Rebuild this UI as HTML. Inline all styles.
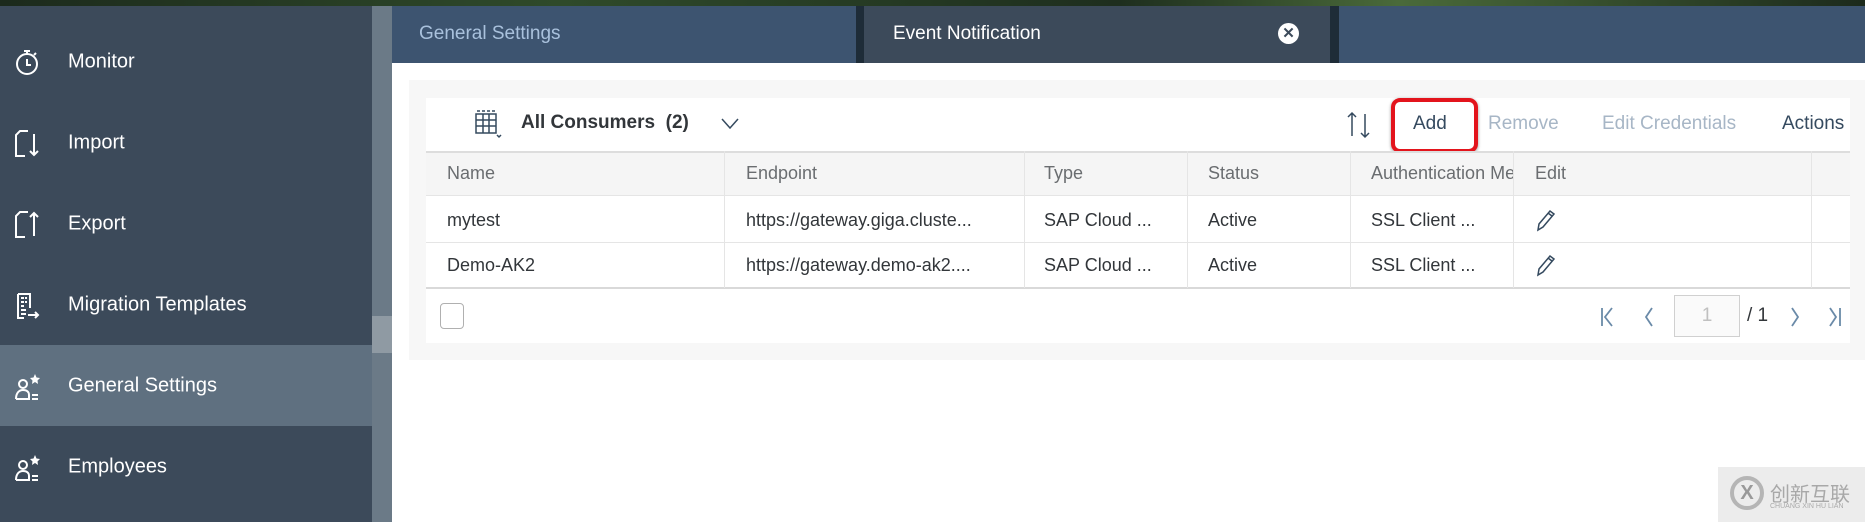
<!DOCTYPE html>
<html><head><meta charset="utf-8"><style>
*{margin:0;padding:0;box-sizing:border-box}
body{width:1865px;height:522px;overflow:hidden;background:#fff;font-family:"Liberation Sans",sans-serif;position:relative}
.a{position:absolute}
.side{left:0;top:6px;width:372px;height:516px;background:#3c4a5a}
.item{position:absolute;left:0;width:372px;height:81px;color:#fff;font-size:20px}
.item span{position:absolute;left:68px;top:50%;transform:translateY(-50%)}
.item svg{position:absolute;left:13px;top:50%;transform:translateY(-50%)}
.t{font-size:18px;color:#32363a;position:absolute;white-space:nowrap}
.h{color:#6a6d70}
.vb{position:absolute;top:151px;height:137px;width:1px;background:#e5e5e5}
</style></head><body>
<div class="a" style="left:0;top:0;width:1865px;height:6px;background:linear-gradient(90deg,#1c2a1c,#2f4a2a 30%,#1e2e1e 60%,#4a6a3a 75%,#1c2a1c)"></div>
<div class="a side">
 <div class="item" style="top:15px"><svg width="30" height="30" viewBox="0 0 30 30" fill="none" stroke="#fff" stroke-width="2"><circle cx="14" cy="17" r="10"/><path d="M11 4h6M14 4v3M14 12v6h4M21 8l2-2"/></svg><span>Monitor</span></div>
 <div class="item" style="top:96px"><svg width="30" height="30" viewBox="0 0 30 30" fill="none" stroke="#fff" stroke-width="2"><path d="M15 3H7L3 7v21h9M21 6v21M17 23l4 4 4-4"/></svg><span>Import</span></div>
 <div class="item" style="top:177px"><svg width="30" height="30" viewBox="0 0 30 30" fill="none" stroke="#fff" stroke-width="2"><path d="M15 3H7L3 7v21h9M21 27V4M17 8l4-4 4 4"/></svg><span>Export</span></div>
 <div class="item" style="top:258px"><svg width="30" height="30" viewBox="0 0 30 30" fill="none" stroke="#fff" stroke-width="2"><path d="M5 4h12v14M5 4v24h6M8 8h3M12 8h2M8 12h3M12 12h2M8 16h3M8 20h5M8 24h5M15 25h10M22 22l3 3-3 3"/></svg><span>Migration Templates</span></div>
 <div class="item" style="top:339px;background:#5f7080"><svg width="30" height="30" viewBox="0 0 30 30" fill="none" stroke="#fff" stroke-width="2"><circle cx="10" cy="13" r="4"/><path d="M3 28c0-6 3-9 7-9s6 2 6 5v4H3M19 24h6M19 28h6"/><path d="M22 3l1.5 3.5 3.5.5-2.5 2.5.5 3.5-3-2-3 2 .5-3.5L17 7l3.5-.5z" fill="#fff" stroke="none"/></svg><span>General Settings</span></div>
 <div class="item" style="top:420px"><svg width="30" height="30" viewBox="0 0 30 30" fill="none" stroke="#fff" stroke-width="2"><circle cx="10" cy="13" r="4"/><path d="M3 28c0-6 3-9 7-9s6 2 6 5v4H3M19 24h6M19 28h6"/><path d="M22 3l1.5 3.5 3.5.5-2.5 2.5.5 3.5-3-2-3 2 .5-3.5L17 7l3.5-.5z" fill="#fff" stroke="none"/></svg><span>Employees</span></div>
</div>
<div class="a" style="left:372px;top:6px;width:20px;height:516px;background:#6b7a87"></div>
<div class="a" style="left:372px;top:316px;width:20px;height:37px;background:#8f9aa3"></div>
<div class="a" style="left:392px;top:6px;width:1473px;height:57px;background:#3d5470"></div>
<div class="a" style="left:856px;top:6px;width:8px;height:57px;background:#1e2c38"></div>
<div class="a" style="left:864px;top:6px;width:466px;height:57px;background:#3c4a5a"></div>
<div class="a" style="left:1330px;top:6px;width:9px;height:57px;background:#1e2c38"></div>
<div class="a" style="left:419px;top:23px;color:#a9c1dc;font-size:19px">General Settings</div>
<div class="a" style="left:893px;top:23px;color:#fff;font-size:19px">Event Notification</div>
<div class="a" style="left:1278px;top:23px;width:21px;height:21px;border-radius:50%;background:#fff;color:#3c4a5a;font-size:15px;font-weight:bold;text-align:center;line-height:21px">✕</div>
<div class="a" style="left:409px;top:80px;width:1456px;height:280px;background:#f7f7f7"></div>
<div class="a" style="left:426px;top:98px;width:1424px;height:245px;background:#fff"></div>
<svg class="a" style="left:473px;top:109px" width="30" height="30" viewBox="0 0 30 30" fill="none" stroke="#354a5f" stroke-width="1.5"><path d="M4 2h3M9 2h3M14 2h3M19 2h3"/><rect x="3" y="5" width="20" height="19"/><path d="M3 11h20M3 17h20M10 5v19M16 5v19M24 26l2 2 2-2"/></svg>
<div class="t" style="left:521px;top:112px;font-weight:bold;font-size:19px">All Consumers &nbsp;(2)</div>
<svg class="a" style="left:721px;top:118px" width="18" height="12" viewBox="0 0 18 12" fill="none" stroke="#354a5f" stroke-width="1.5"><path d="M1 1l8 9 8-9"/></svg>
<svg class="a" style="left:1344px;top:110px" width="30" height="30" viewBox="0 0 30 30" fill="none" stroke="#354a5f" stroke-width="1.5"><path d="M8 26V3M4 7l4-4 4 4M21 4v23M17 23l4 4 4-4"/></svg>
<div class="a" style="left:1391px;top:98px;width:87px;height:55px;border:4px solid #e3141c;border-radius:9px;box-shadow:0 1px 3px rgba(0,0,0,.4)"></div>
<div class="t" style="left:1413px;top:113px;color:#354a5f;font-size:19px">Add</div>
<div class="t" style="left:1488px;top:113px;color:#a7b6c6;font-size:19px">Remove</div>
<div class="t" style="left:1602px;top:113px;color:#a7b6c6;font-size:19px">Edit Credentials</div>
<div class="t" style="left:1782px;top:113px;color:#354a5f;font-size:19px">Actions</div>
<div class="a" style="left:426px;top:151px;width:1424px;height:45px;background:#f5f5f5;border-top:2px solid #ddd;border-bottom:1px solid #e5e5e5"></div>
<div class="a" style="left:426px;top:242px;width:1424px;height:1px;background:#e5e5e5"></div>
<div class="a" style="left:426px;top:287px;width:1424px;height:2px;background:#d9d9d9"></div>
<div class="vb" style="left:724px"></div><div class="vb" style="left:1024px"></div><div class="vb" style="left:1187px"></div><div class="vb" style="left:1350px"></div><div class="vb" style="left:1513px"></div><div class="vb" style="left:1811px"></div>
<div class="t h" style="left:447px;top:163px">Name</div>
<div class="t h" style="left:746px;top:163px">Endpoint</div>
<div class="t h" style="left:1044px;top:163px">Type</div>
<div class="t h" style="left:1208px;top:163px">Status</div>
<div class="t h" style="left:1371px;top:163px;width:142px;overflow:hidden">Authentication Method</div>
<div class="t h" style="left:1535px;top:163px">Edit</div>
<div class="t" style="left:447px;top:210px">mytest</div>
<div class="t" style="left:746px;top:210px">https://gateway.giga.cluste...</div>
<div class="t" style="left:1044px;top:210px">SAP Cloud ...</div>
<div class="t" style="left:1208px;top:210px">Active</div>
<div class="t" style="left:1371px;top:210px">SSL Client ...</div>
<div class="t" style="left:447px;top:255px">Demo-AK2</div>
<div class="t" style="left:746px;top:255px">https://gateway.demo-ak2....</div>
<div class="t" style="left:1044px;top:255px">SAP Cloud ...</div>
<div class="t" style="left:1208px;top:255px">Active</div>
<div class="t" style="left:1371px;top:255px">SSL Client ...</div>
<svg class="a" style="left:1534px;top:208px" width="22" height="24" viewBox="0 0 22 24" fill="none" stroke="#354a5f" stroke-width="1.5"><path d="M4 22l1-6L16 3l4 3L9 19z M4 22l5-3M14 5l4 3"/></svg>
<svg class="a" style="left:1534px;top:253px" width="22" height="24" viewBox="0 0 22 24" fill="none" stroke="#354a5f" stroke-width="1.5"><path d="M4 22l1-6L16 3l4 3L9 19z M4 22l5-3M14 5l4 3"/></svg>
<div class="a" style="left:440px;top:303px;width:24px;height:26px;border:1px solid #b0b0b0;border-radius:4px"></div>
<svg class="a" style="left:1596px;top:304px" width="250" height="26" viewBox="0 0 250 26" fill="none" stroke="#6a8aa8" stroke-width="1.8"><path d="M6 4v18M16 4l-7 9 7 9M56 4l-6 9 6 9M196 4l6 9-6 9M234 4l6 9-6 9M244 4v18"/></svg>
<div class="a" style="left:1674px;top:295px;width:66px;height:42px;border:1px solid #d0d0d0;background:#fafafa;color:#c0c0c0;font-size:19px;text-align:center;line-height:40px">1</div>
<div class="t" style="left:1747px;top:305px;font-size:19px">/ 1</div>
<div class="a" style="left:1718px;top:467px;width:147px;height:55px;background:#ececec"></div>
<div class="a" style="left:1730px;top:476px;width:34px;height:34px;border:4px solid #b5b5b5;border-radius:50%;color:#999;font-size:20px;font-weight:bold;text-align:center;line-height:26px">X</div>
<div class="a" style="left:1770px;top:478px;color:#a8a8a8;font-size:20px;font-family:'Liberation Sans','Noto Sans CJK SC',sans-serif">创新互联</div>
<div class="a" style="left:1770px;top:503px;color:#aaa;font-size:7px">CHUANG XIN HU LIAN</div>
</body></html>
